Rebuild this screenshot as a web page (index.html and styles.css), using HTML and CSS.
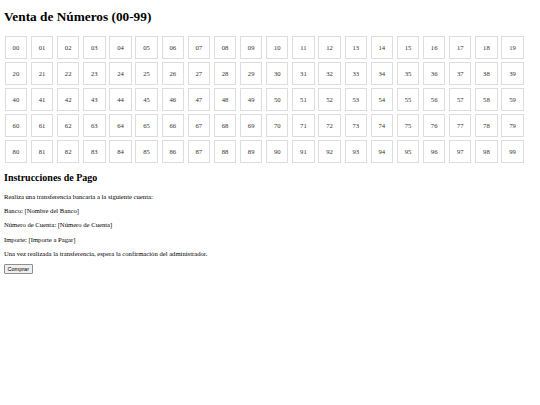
FILE: index.html
```html
<!DOCTYPE html>
<html lang="es">
<head>
<meta charset="utf-8">
<title>Venta de Números (00-99)</title>
<link rel="stylesheet" href="styles.css">
</head>
<body>
<h1 class="title">Venta de Números (00-99)</h1>
<div class="numbers" id="numbers"></div>
<h2 class="subtitle">Instrucciones de Pago</h2>
<p class="text">Realiza una transferencia bancaria a la siguiente cuenta:</p>
<p class="text">Banco: [Nombre del Banco]</p>
<p class="text">Número de Cuenta: [Número de Cuenta]</p>
<p class="text">Importe: [Importe a Pagar]</p>
<p class="text">Una vez realizada la transferencia, espera la confirmación del administrador.</p>
<button class="buy" type="button">Comprar</button>
<script src="script.js"></script>
</body>
</html>
```

FILE: script.js
```js
var box = document.getElementById('numbers');
for (var i = 0; i < 100; i++) {
  var d = document.createElement('div');
  d.className = 'number';
  d.textContent = (i < 10 ? '0' : '') + i;
  box.appendChild(d);
}
```

FILE: styles.css
```css
html {
  background: #ffffff;
}
body {
  margin: 3.3px;
  font-family: "Liberation Serif", "Times New Roman", serif;
  font-size: 6.65px;
  color: #000000;
}
.title {
  font-size: 13.3px;
  font-weight: bold;
  margin: 6px 0 8.9px 0.7px;
  line-height: 15.3px;
}
.numbers {
  display: flex;
  flex-wrap: wrap;
  column-gap: 3.76px;
  row-gap: 3.6px;
  padding: 2.7px 0 0 1.4px;
  width: 524px;
}
.number {
  box-sizing: border-box;
  width: 22.4px;
  height: 22.4px;
  border: 1px solid #dddddd;
  display: flex;
  align-items: center;
  justify-content: center;
  font-size: 6.65px;
  color: #333333;
}
.subtitle {
  font-size: 10px;
  font-weight: bold;
  line-height: 11.5px;
  margin: 9.6px 0 9.3px 0.7px;
}
.text {
  margin: 6.65px 0 6.65px 0.7px;
  line-height: 7.65px;
}
.buy {
  margin-left: 0.7px;
  font-family: "Liberation Sans", Arial, sans-serif;
  font-size: 5.5px;
  line-height: 6.4px;
  padding: 0.5px 2.6px;
  border: 1px solid #8f8f8f;
  border-radius: 1px;
  background: #efefef;
  color: #000000;
}
```
